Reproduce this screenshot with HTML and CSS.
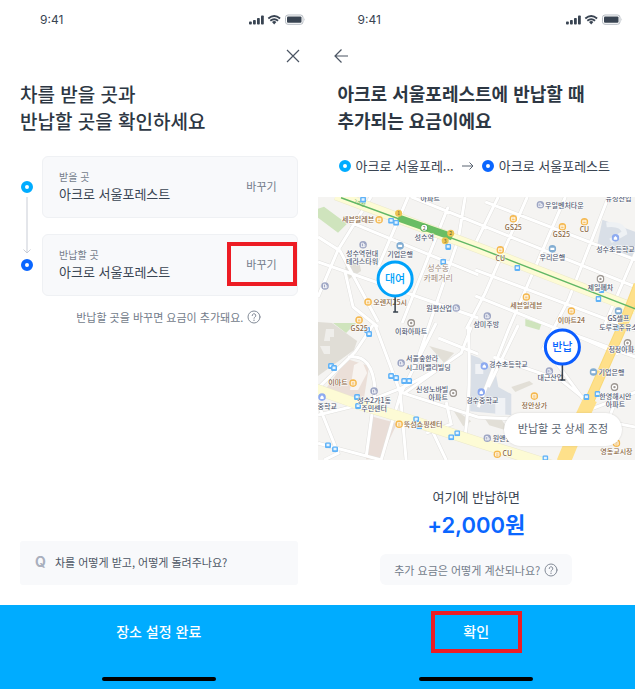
FILE: index.html
```html
<!DOCTYPE html>
<html lang="ko">

<head>
    <meta charset="UTF-8">
    <meta name="viewport" content="width=device-width, initial-scale=1.0">
    <title>반납 장소 설정</title>
    <link rel="stylesheet" href="styles.css">
</head>

<body>

    <!-- Shared icons -->
    <svg class="sprite" aria-hidden="true">
        <symbol id="status" viewBox="0 0 57 12">
            <g fill="#394452">
                <rect x="0" y="7.500" width="2.800" height="3" rx=".8" />
                <rect x="4" y="6" width="2.800" height="4.500" rx=".8" />
                <rect x="8" y="4" width="2.800" height="6.500" rx=".8" />
                <rect x="12" y="1.500" width="2.800" height="9" rx=".8" />
                <path d="M23 8q2.200-1.800 4.400 0l-2.200 2.600z" />
            </g>
            <path d="M19.300 4.500q5.900-5 11.800 0M21.300 6.800q3.900-3.200 7.800 0" fill="none" stroke="#394452" stroke-width="1.800" />
            <rect x="36.500" y="1" width="17.500" height="9.300" rx="2.500" fill="none" stroke="#b5bbc2" />
            <rect x="38" y="2.500" width="14.500" height="6.300" rx="1" fill="#394452" />
            <path d="M55.500 4v3q1.200-1.500 0-3" fill="#b5bbc2" />
        </symbol>
        <symbol id="help" viewBox="0 0 14 14">
            <g fill="none" stroke="#848c98" stroke-linecap="round">
                <circle cx="7" cy="7" r="6" />
                <path d="M5.200 5.600a1.800 1.800 0 1 1 2.700 1.500q-.9.500-.9 1.200" />
            </g>
            <circle cx="7" cy="10.200" r=".7" fill="#848c98" />
        </symbol>
        <symbol id="shop" viewBox="0 0 8 8">
            <circle cx="4" cy="4" r="3.800" fill="#f5b84e" />
            <path d="M2.300 2.500h3.400v3.300H2.300zM2.300 3.900h3.400" fill="none" stroke="#fff" stroke-width=".8" />
        </symbol>
        <symbol id="office" viewBox="0 0 8 8">
            <circle cx="4" cy="4" r="3.800" fill="#9ea6c4" />
            <path d="M2.500 5.800V2.300h2v3.500M4.500 3.800h1.300v2H2" fill="none" stroke="#fff" stroke-width=".8" />
        </symbol>
        <symbol id="bank" viewBox="0 0 8 8">
            <circle cx="4" cy="4" r="3.800" fill="#82add2" />
            <path d="M2 3h4v2.200H2z" fill="#fff" />
        </symbol>
        <symbol id="place" viewBox="0 0 8 8">
            <circle cx="4" cy="4" r="3.300" fill="#fff" stroke="#9d9792" stroke-width="1.400" />
            <circle cx="4" cy="4" r="1.200" fill="#9d9792" />
        </symbol>
        <symbol id="school" viewBox="0 0 8 8">
            <circle cx="4" cy="4" r="3.800" fill="#8daaf0" />
            <path d="M2.300 5.800V3.900L4 2.200l1.700 1.700v1.900z" fill="#fff" />
        </symbol>
        <symbol id="bus" viewBox="0 0 6 6">
            <rect width="6" height="6" rx="1.500" fill="#5fb2f7" />
            <path d="M1.500 1.500h3v2.500h-3z" fill="#e6f4ff" />
        </symbol>
    </svg>

    <main class="screen">
        <div class="status-bar">
            <span>9:41</span>
            <svg class="status-icons"><use href="#status" /></svg>
        </div>
        <div class="nav nav-end">
            <button class="icon-button" aria-label="닫기">
                <svg width="14" height="14" viewBox="0 0 14 14"><path d="M1 1l12 12M13 1L1 13" /></svg>
            </button>
        </div>
        <h1 class="title">차를 받을 곳과<br>반납할 곳을 확인하세요</h1>

        <div class="places">
            <div class="route-line">
                <span class="dot"></span>
                <svg width="10" height="58" viewBox="0 0 10 58"><path d="M5 0v56M1.500 52.500L5 56l3.500-3.500" /></svg>
                <span class="dot dot-return"></span>
            </div>
            <div class="place-list">
                <section class="place">
                    <div>
                        <p class="place-label">받을 곳</p>
                        <p class="place-name">아크로 서울포레스트</p>
                    </div>
                    <button class="change">바꾸기</button>
                </section>
                <section class="place">
                    <div>
                        <p class="place-label">반납할 곳</p>
                        <p class="place-name">아크로 서울포레스트</p>
                    </div>
                    <button class="change marked">바꾸기</button>
                </section>
            </div>
        </div>
        <p class="hint">반납할 곳을 바꾸면 요금이 추가돼요. <svg class="help"><use href="#help" /></svg></p>

        <a class="faq" href="#faq"><span class="faq-mark">Q</span>차를 어떻게 받고, 어떻게 돌려주나요?</a>
        <footer class="footer">
            <button class="submit">장소 설정 완료</button>
            <div class="home-bar"></div>
        </footer>
    </main>

    <main class="screen">
        <div class="status-bar">
            <span>9:41</span>
            <svg class="status-icons"><use href="#status" /></svg>
        </div>
        <div class="nav">
            <button class="icon-button" aria-label="뒤로">
                <svg width="16" height="14" viewBox="0 0 16 14"><path d="M14 7H1M7.500 .5L1 7l6.500 6.500" /></svg>
            </button>
        </div>
        <h1 class="title title-bold">아크로 서울포레스트에 반납할 때<br>추가되는 요금이에요</h1>

        <div class="route">
            <span class="dot"></span>
            <span>아크로 서울포레...</span>
            <svg width="12" height="10" viewBox="0 0 12 10"><path d="M0 5h11M7.500 1.500L11 5 7.500 8.500" /></svg>
            <span class="dot dot-return"></span>
            <span>아크로 서울포레스트</span>
        </div>

        <div class="map">
            <svg class="map-canvas" viewBox="0 0 317 263" preserveAspectRatio="xMidYMid slice" role="img" aria-label="지도">
                <rect width="317" height="263" fill="#f5f4f2" />

                <!-- Blocks -->
                <path d="M6 10L29 27 20 36 0 21V12zM15 126h23l-10 10zM207 122l16 5-2 6-14-4z" fill="#cfe4bd" />
                <path d="M0 125l14 1 25 18-3 9-36 26z" fill="#e0ddd6" />
                <path d="M8 132h8v8h-4v4H6zM2 149h10v8H6z" fill="#efeeeb" />
                <path d="M29 162l22 7-6 38-38-14z" fill="#ebdfd8" />
                <path d="M36 168l8-4 5 12-9 17h-8z" fill="#f8f4f1" />
                <path d="M53 219l26 7-17 36H48z" fill="#e9ddd7" />
                <path d="M284 23l33 12v26l-38-14z" fill="#d9dfe7" />
                <path d="M288 28q16-2 18 8l-14 8" fill="none" stroke="#eef1f4" stroke-width="5" />
                <path d="M151 157l10 4 16 13 3 16 13 7v21l-41-4z" fill="#d9dfe7" />
                <path d="M157 167h8v10h-8zM177 201h10v17h-10z" fill="#f0f2f5" />
                <path d="M111 149l25 7-10 10zM193 190l18-6 4 3-18 8zM133 210l20 14-8 5zM165 219l18 3 8 12-20-6z" fill="#e2dfd7" />
                <path d="M27 70l14-6 2 10-12 8z" fill="#e0ded7" />

                <!-- Side streets -->
                <g class="street-edge">
                    <path id="streets" d="M93 0l67 27 157 63M167 5l150 58M24 22l136 56M0 65l160 56M157 73l160 60M157 99l77 31 83 30M0 40l22 14 38 71M53 0L20 53 0 100M90 0L60 70M130 10L84 126M147 0l-7 43-43 126M209 0l-42 96-19 36M247 0l-57 133-30 77M290 0l-40 103-26 50M317 56l-33 77M180 0l-23 47M27 75l8 35 25 20M57 128l25 67 6 68M118 126l-36 72-19 65M0 191l37-36 18-27M30 160q25-4 27 34l-9 66M0 218l40-10 43-17q31-14 60-35l10-26M82 195l78 25 41 2h60M120 141l40 16M150 128q3 66-3 110M128 263l-18-38M0 246l64 17M0 206l20 50-14 7M175 160l70 24M244 184l25 20M230 155l40 54M250 135l50 22M317 195l-55 21-11 40M276 222l41 8M300 196l-15 40M85 197l52-37M128 205l5 22-25 9M200 128l-30 62" />
                </g>
                <use href="#streets" class="street" />

                <!-- Main roads -->
                <path class="road-edge" d="M18 -2l142 53 157 61M-2 192l42 15 40 12 80 26 82 26" />
                <path class="road" d="M18 -2l142 53 157 61M-2 192l42 15 40 12 80 26 82 26" />
                <path d="M320 88l-16 41-34 77-24 60" fill="none" stroke="#f9d978" stroke-width="10" />
                <path d="M320 88l-16 41-34 77-24 60" fill="none" stroke="#fee08a" stroke-width="8" />
                <path d="M272 202l-8 17-19 46" fill="none" stroke="#fee08a" stroke-width="14" />

                <!-- Metro line -->
                <path d="M23 1l137 50 157 61" fill="none" stroke="#61b765" stroke-width="1.500" />
                <path d="M80 21l54 19" fill="none" stroke="#69bd63" stroke-width="7" />
                <circle cx="106" cy="31" r="3.500" fill="#fff" stroke="#59af59" />
                <g fill="#edc451">
                    <circle cx="80.500" cy="16.500" r="3.500" />
                    <circle cx="132.500" cy="36.500" r="3.500" />
                    <circle cx="127" cy="44" r="3.500" />
                </g>
                <g class="tiny">
                    <text x="106" y="33">2</text>
                    <text x="80.500" y="18.500">1</text>
                    <text x="132.500" y="38.500">2</text>
                    <text x="127" y="46">3</text>
                    <text x="41" y="8" fill="#61b765" transform="rotate(20 41 8)">2호선</text>
                </g>

                <!-- Map icons -->
                <g>
                    <use href="#shop" x="57" y="19" width="8" height="8" />
                    <use href="#shop" x="46" y="101" width="8" height="8" />
                    <use href="#shop" x="37" y="119" width="8" height="8" />
                    <use href="#shop" x="191" y="18" width="8" height="8" />
                    <use href="#shop" x="240" y="26" width="8" height="8" />
                    <use href="#shop" x="262" y="21" width="8" height="8" />
                    <use href="#shop" x="178" y="49" width="8" height="8" />
                    <use href="#shop" x="204" y="96" width="8" height="8" />
                    <use href="#shop" x="249" y="110" width="8" height="8" />
                    <use href="#shop" x="31" y="182" width="8" height="8" />
                    <use href="#shop" x="77" y="223" width="8" height="8" />
                    <use href="#shop" x="212" y="195" width="8" height="8" />
                    <use href="#shop" x="175" y="253" width="8" height="8" />
                    <use href="#shop" x="294" y="242" width="8" height="8" />
                    <use href="#office" x="41" y="44" width="8" height="8" />
                    <use href="#office" x="3" y="85" width="8" height="8" />
                    <use href="#office" x="134" y="107" width="8" height="8" />
                    <use href="#office" x="218" y="4" width="8" height="8" />
                    <use href="#office" x="165" y="115" width="8" height="8" />
                    <use href="#office" x="79" y="162" width="8" height="8" />
                    <use href="#office" x="52" y="190" width="8" height="8" />
                    <use href="#office" x="227" y="170" width="8" height="8" />
                    <use href="#office" x="165" y="237" width="8" height="8" />
                    <use href="#bank" x="78" y="45" width="8" height="8" />
                    <use href="#bank" x="230" y="48" width="8" height="8" />
                    <use href="#bank" x="296" y="110" width="8" height="8" />
                    <use href="#bank" x="271" y="171" width="8" height="8" />
                    <use href="#place" x="89" y="122" width="8" height="8" />
                    <use href="#place" x="278" y="78" width="8" height="8" />
                    <use href="#place" x="131" y="192" width="8" height="8" />
                    <use href="#place" x="305" y="142" width="8" height="8" />
                    <use href="#place" x="292" y="186" width="8" height="8" />
                    <use href="#school" x="293" y="37" width="8" height="8" />
                    <use href="#school" x="0" y="196" width="8" height="8" />
                    <use href="#school" x="162" y="165" width="8" height="8" />
                    <use href="#school" x="159" y="191" width="8" height="8" />
                </g>
                <g>
                    <use href="#bus" x="42" y="0" width="6" height="6" />
                    <use href="#bus" x="70" y="21" width="6" height="6" />
                    <use href="#bus" x="75" y="23" width="6" height="6" />
                    <use href="#bus" x="127" y="47" width="6" height="6" />
                    <use href="#bus" x="122" y="62" width="6" height="6" />
                    <use href="#bus" x="196" y="68" width="6" height="6" />
                    <use href="#bus" x="280" y="90" width="6" height="6" />
                    <use href="#bus" x="277" y="99" width="6" height="6" />
                    <use href="#bus" x="46" y="130" width="6" height="6" />
                    <use href="#bus" x="48" y="134" width="6" height="6" />
                    <use href="#bus" x="10" y="166" width="6" height="6" />
                    <use href="#bus" x="13" y="168" width="6" height="6" />
                    <use href="#bus" x="70" y="176" width="6" height="6" />
                    <use href="#bus" x="75" y="178" width="6" height="6" />
                    <use href="#bus" x="83" y="181" width="6" height="6" />
                    <use href="#bus" x="88" y="181" width="6" height="6" />
                    <use href="#bus" x="36" y="197" width="6" height="6" />
                    <use href="#bus" x="37" y="206" width="6" height="6" />
                    <use href="#bus" x="95" y="219" width="6" height="6" />
                    <use href="#bus" x="98" y="226" width="6" height="6" />
                    <use href="#bus" x="136" y="233" width="6" height="6" />
                    <use href="#bus" x="130" y="237" width="6" height="6" />
                    <use href="#bus" x="7" y="245" width="6" height="6" />
                    <use href="#bus" x="14" y="249" width="6" height="6" />
                    <use href="#bus" x="265" y="197" width="6" height="6" />
                    <use href="#bus" x="276" y="194" width="6" height="6" />
                    <use href="#bus" x="295" y="128" width="6" height="6" />
                    <use href="#bus" x="224" y="258" width="6" height="6" />
                </g>

                <!-- Map labels -->
                <g class="label">
                    <text x="112" y="4">아파트</text>
                    <text x="106" y="43">성수역</text>
                    <text x="44" y="59">성수역현대</text>
                    <text x="44" y="67">테라스타워</text>
                    <text x="82" y="60">기업은행</text>
                    <text x="121" y="114">원평산업</text>
                    <text x="93" y="137">이화아파트</text>
                    <text x="246" y="11">우일벤처타운</text>
                    <text x="300" y="4">유성산업</text>
                    <text x="297" y="55">성수초등학교</text>
                    <text x="234" y="63">우리은행</text>
                    <text x="282" y="93">제일폐차</text>
                    <text x="168" y="130">삼미주방</text>
                    <text x="300" y="124">GS셀프</text>
                    <text x="300" y="133">도루코주유소</text>
                    <text x="104" y="164">서울숲한라</text>
                    <text x="110" y="173">시그마밸리빌딩</text>
                    <text x="114" y="195">신성노바빌</text>
                    <text x="120" y="203">아파트</text>
                    <text x="56" y="206">성수2가1동</text>
                    <text x="56" y="214">주민센터</text>
                    <text x="6" y="212">서중학교</text>
                    <text x="190" y="170">경수초등학교</text>
                    <text x="164" y="206">경수중학교</text>
                    <text x="232" y="183">대근산업</text>
                    <text x="293" y="178">기업은행</text>
                    <text x="306" y="155">청정아파트</text>
                    <text x="297" y="202">한영해시안</text>
                    <text x="297" y="210">아파트</text>
                    <text x="184" y="244">원앤원</text>
                </g>
                <g class="label label-shop">
                    <text x="40" y="25">세븐일레븐</text>
                    <text x="72" y="108">오렌지25시</text>
                    <text x="41" y="134">GS25</text>
                    <text x="195" y="33">GS25</text>
                    <text x="243" y="40">GS25</text>
                    <text x="266" y="35">CU</text>
                    <text x="182" y="64">CU</text>
                    <text x="208" y="111">세븐일레븐</text>
                    <text x="253" y="126">이마트24</text>
                    <text x="20" y="188">이마트</text>
                    <text x="105" y="230">뚝섬쇼핑센터</text>
                    <text x="216" y="211">정안상가</text>
                    <text x="189" y="259">CU</text>
                    <text x="298" y="257">영동교시장</text>
                </g>
                <g class="label label-area">
                    <text x="120" y="74">성수동</text>
                    <text x="120" y="84">카페거리</text>
                </g>

                <!-- Pins -->
                <g class="pin pin-pickup">
                    <path d="M77 100v15M75 115h5" />
                    <circle cx="77" cy="82" r="17" />
                    <text x="77" y="86">대여</text>
                </g>
                <g class="pin pin-return">
                    <path d="M244 168v15M242 183h5" />
                    <circle cx="244" cy="150" r="17" />
                    <text x="244" y="154">반납</text>
                </g>
            </svg>
            <button class="adjust">반납할 곳 상세 조정</button>
        </div>

        <div class="fee">
            <p class="fee-label">여기에 반납하면</p>
            <p class="fee-price">+2,000원</p>
            <button class="fee-help">추가 요금은 어떻게 계산되나요? <svg class="help"><use href="#help" /></svg></button>
        </div>
        <footer class="footer">
            <button class="submit marked">확인</button>
            <div class="home-bar"></div>
        </footer>
    </main>

</body>

</html>
```
FILE: styles.css
```css
* {
    margin: 0;
    padding: 0;
    box-sizing: border-box;
}

body {
    display: flex;
    min-height: 100vh;
    background-color: #fff;
    color: #394452;
    font-family: "Noto Sans CJK KR", sans-serif;
    font-size: 13px;
    line-height: 20px;
}

button {
    border: none;
    background: none;
    color: inherit;
    font: inherit;
    cursor: pointer;
}

svg {
    flex: none;
}

.sprite {
    position: absolute;
    width: 0;
    height: 0;
}

.screen {
    flex: 1;
    min-width: 0;
    display: flex;
    flex-direction: column;
}

/* Top of screen */
.status-bar {
    display: flex;
    justify-content: space-between;
    align-items: center;
    height: 40px;
    padding: 0 12px 0 40px;
    font-family: Inter, sans-serif;
    font-size: 12px;
}

.status-icons {
    width: 57px;
    height: 12px;
}

.nav {
    display: flex;
    align-items: center;
    height: 32px;
    padding: 0 16px;
}

.nav-end {
    justify-content: flex-end;
    padding: 0 18px;
}

.icon-button {
    display: flex;
}

.icon-button path {
    fill: none;
    stroke: #4b5563;
    stroke-width: 1.2;
}

.title {
    margin: 8px 20px 22px;
    color: #2d3743;
    font-size: 19px;
    font-weight: 500;
    line-height: 27px;
}

.title-bold {
    font-size: 18px;
    font-weight: 700;
}

/* Pick up and return places */
.dot {
    flex: none;
    width: 12px;
    height: 12px;
    border: 4px solid #00acff;
    border-radius: 50%;
}

.dot-return {
    border-color: #0a66ff;
}

.places {
    display: flex;
    gap: 9px;
    padding: 0 20px 0 21px;
}

.route-line {
    display: flex;
    flex-direction: column;
    align-items: center;
    justify-content: center;
    gap: 4px;
}

.route-line path {
    fill: none;
    stroke: #c9cdd6;
}

.place-list {
    flex: 1;
    display: flex;
    flex-direction: column;
    gap: 16px;
}

.place {
    display: flex;
    justify-content: space-between;
    align-items: center;
    height: 62px;
    padding: 0 0 2px 16px;
    border: 1px solid #eff1f4;
    border-radius: 6px;
    background-color: #f8f9fb;
}

.place-label {
    color: #737c8a;
    font-size: 10px;
    line-height: 16px;
}

.place-name {
    line-height: 18px;
}

.change {
    width: 70px;
    height: 44px;
    border: 4px solid transparent;
    color: #737c8a;
    font-size: 11px;
}

.marked {
    border-color: #ed1c24;
}

.help {
    width: 14px;
    height: 14px;
}

.hint {
    display: flex;
    justify-content: center;
    align-items: center;
    gap: 4px;
    margin: 11px 0 20px 20px;
    color: #737c8a;
    font-size: 11px;
}

.faq {
    display: flex;
    align-items: center;
    gap: 9px;
    height: 44px;
    margin: auto 20px 20px;
    padding: 0 15px 2px;
    border-radius: 3px;
    background-color: #f8f9fb;
    color: #4b5563;
    font-size: 11px;
    text-decoration: none;
}

.faq-mark {
    color: #a9afbd;
    font-family: Inter, sans-serif;
    font-size: 14px;
    font-weight: 700;
}

/* Bottom button */
.footer {
    display: flex;
    flex-direction: column;
    align-items: center;
    justify-content: space-between;
    height: 84px;
    padding: 6px 0 8px;
    background-color: #00acff;
}

.submit {
    min-width: 91px;
    height: 42px;
    padding-bottom: 2px;
    border: 4px solid transparent;
    color: #fff;
    font-size: 14px;
    font-weight: 500;
}

.submit.marked {
    border-color: #ed1c24;
}

.home-bar {
    width: 114px;
    height: 4px;
    border-radius: 2px;
    background-color: #000;
}

/* Route summary */
.route {
    display: flex;
    align-items: center;
    gap: 5px;
    margin-bottom: 21px;
    padding: 0 21px;
    white-space: nowrap;
}

.route svg {
    margin: 0 3px;
}

.route path {
    fill: none;
    stroke: #596370;
}

/* Map */
.map {
    position: relative;
    height: 263px;
}

.map-canvas {
    display: block;
    width: 100%;
    height: 100%;
}

.street,
.street-edge {
    fill: none;
    stroke: #fff;
    stroke-width: 3;
}

.street-edge {
    stroke: #e1e0de;
    stroke-width: 4;
}

.street-edge path {
    stroke: inherit;
    stroke-width: inherit;
}

.road-edge,
.road {
    fill: none;
    stroke: #ebe8cc;
    stroke-width: 11;
}

.road {
    stroke: #fdfbd5;
    stroke-width: 10;
}

.label {
    fill: #545c73;
    stroke: #fff;
    stroke-width: 1;
    paint-order: stroke;
    font-size: 7px;
    font-weight: 500;
    text-anchor: middle;
}

.label-shop {
    fill: #8a6642;
}

.label-area {
    fill: #9b8778;
    font-size: 8px;
    font-weight: 400;
}

.tiny {
    fill: #4d5a38;
    font-size: 5px;
    text-anchor: middle;
}

.pin circle {
    fill: #fff;
    stroke: #00a2fa;
    stroke-width: 3;
}

.pin path {
    stroke: #37414d;
    stroke-width: 1.5;
}

.pin text {
    fill: #00a2fa;
    font-size: 11px;
    font-weight: 500;
    text-anchor: middle;
}

.pin.pin-return circle {
    stroke: #0a5cff;
}

.pin.pin-return text {
    fill: #0a66ff;
}

.adjust {
    position: absolute;
    right: 13px;
    bottom: 14px;
    height: 33px;
    padding: 0 14px 3px;
    border-radius: 17px;
    background-color: #fff;
    box-shadow: 0 0 2px rgba(0, 0, 0, 0.15);
    color: #596370;
    font-size: 11px;
}

/* Extra fee */
.fee {
    display: flex;
    flex-direction: column;
    align-items: center;
    margin-bottom: auto;
    padding: 27px 20px 19px;
}

.fee-price {
    margin: 2px 0 13px;
    color: #0a66ff;
    font-family: Inter, "Noto Sans CJK KR", sans-serif;
    font-size: 22px;
    font-weight: 600;
    line-height: 32px;
}

.fee-help {
    display: flex;
    align-items: center;
    gap: 4px;
    height: 31px;
    padding: 0 14px;
    border-radius: 6px;
    background-color: #f8f9fb;
    color: #737c8a;
    font-size: 11px;
}
```
